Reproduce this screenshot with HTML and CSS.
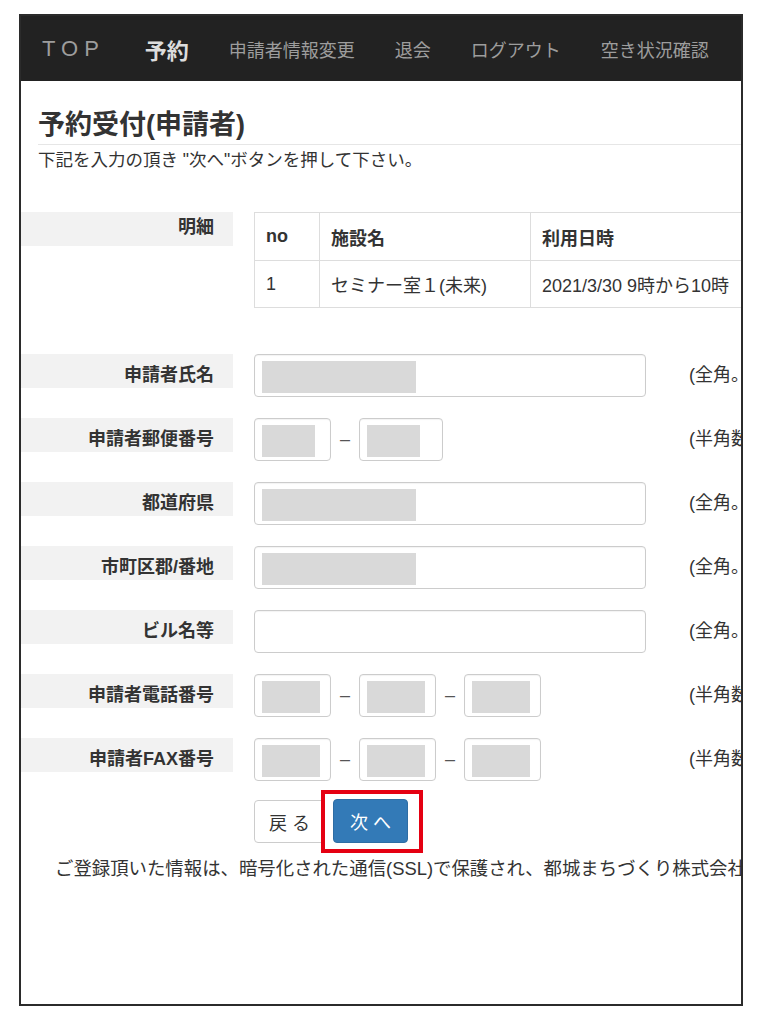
FILE: index.html
```html
<!DOCTYPE html>
<html lang="ja">
<head>
  <meta charset="utf-8">
  <title>予約受付(申請者)</title>
  <link rel="stylesheet" href="styles.css">
</head>
<body>

  <div class="frame">
    <div class="page">

      <nav class="navbar">
        <a class="brand" href="#">TOP</a>
        <ul class="nav-links">
          <li><a class="active" href="#">予約</a></li>
          <li><a href="#">申請者情報変更</a></li>
          <li><a href="#">退会</a></li>
          <li><a href="#">ログアウト</a></li>
          <li><a href="#">空き状況確認</a></li>
        </ul>
      </nav>

      <div class="page-header">
        <h1>予約受付(申請者)</h1>
        <p class="lead">下記を入力の頂き "次へ"ボタンを押して下さい。</p>
      </div>

      <form class="entry-form">
        <!-- 明細 -->
        <div class="row row-detail">
          <div class="label label-detail">明細</div>
          <table class="detail-table">
            <thead>
              <tr>
                <th class="col-no">no</th>
                <th class="col-name">施設名</th>
                <th class="col-date">利用日時</th>
              </tr>
            </thead>
            <tbody>
              <tr>
                <td>1</td>
                <td>セミナー室１(未来)</td>
                <td>2021/3/30 9時から10時</td>
              </tr>
            </tbody>
          </table>
        </div>

        <div class="row row-first">
          <div class="label">申請者氏名</div>
          <div class="field">
            <input class="input input-wide masked" type="text">
          </div>
          <div class="hint">(全角。50文字以内)</div>
        </div>

        <div class="row">
          <div class="label">申請者郵便番号</div>
          <div class="field field-group">
            <input class="input input-zip1 masked" type="text">
            <span class="dash">–</span>
            <input class="input input-zip2 masked" type="text">
          </div>
          <div class="hint">(半角数字)</div>
        </div>

        <div class="row">
          <div class="label">都道府県</div>
          <div class="field">
            <input class="input input-wide masked" type="text">
          </div>
          <div class="hint">(全角。10文字以内)</div>
        </div>

        <div class="row">
          <div class="label">市町区郡/番地</div>
          <div class="field">
            <input class="input input-wide masked" type="text">
          </div>
          <div class="hint">(全角。50文字以内)</div>
        </div>

        <div class="row">
          <div class="label">ビル名等</div>
          <div class="field">
            <input class="input input-wide" type="text">
          </div>
          <div class="hint">(全角。50文字以内)</div>
        </div>

        <div class="row">
          <div class="label">申請者電話番号</div>
          <div class="field field-group">
            <input class="input input-tel masked" type="text">
            <span class="dash">–</span>
            <input class="input input-tel masked" type="text">
            <span class="dash">–</span>
            <input class="input input-tel masked" type="text">
          </div>
          <div class="hint">(半角数字)</div>
        </div>

        <div class="row">
          <div class="label">申請者FAX番号</div>
          <div class="field field-group">
            <input class="input input-tel masked" type="text">
            <span class="dash">–</span>
            <input class="input input-tel masked" type="text">
            <span class="dash">–</span>
            <input class="input input-tel masked" type="text">
          </div>
          <div class="hint">(半角数字)</div>
        </div>

        <div class="buttons">
          <button class="btn btn-back" type="button">戻る</button>
          <span class="next-wrap">
            <button class="btn btn-next" type="submit">次へ</button>
          </span>
        </div>
      </form>

      <p class="notice">ご登録頂いた情報は、暗号化された通信(SSL)で保護され、都城まちづくり株式会社が責任をもって管理いたします。</p>

    </div>
  </div>

</body>
</html>
```

FILE: styles.css
```css
* {
  box-sizing: border-box;
}

body {
  margin: 0;
  background: #fff;
  color: #333;
  font-family: "Liberation Sans", "Noto Sans CJK JP", sans-serif;
  font-size: 18px;
}

/* screenshot frame */
.frame {
  width: 724px;
  height: 992px;
  margin: 14px 0 0 19px;
  border: 2px solid #2b2b2b;
  overflow: hidden;
}

.page {
  width: 1000px;
}

/* navbar */
.navbar {
  display: flex;
  align-items: center;
  height: 65px;
  padding-left: 21px;
  background: #222;
}

.brand {
  font-size: 22px;
  letter-spacing: 6px;
  color: #9d9d9d;
  text-decoration: none;
}

.nav-links {
  display: flex;
  align-items: center;
  gap: 40px;
  margin: 0 0 0 40px;
  padding: 0;
  list-style: none;
}

.nav-links a {
  color: #9d9d9d;
  font-size: 18px;
  text-decoration: none;
}

.nav-links a.active {
  color: #ddd;
  font-size: 22px;
  font-weight: bold;
}

/* header */
.page-header {
  padding: 0 0 0 17px;
}

.page-header h1 {
  margin: 28px 0 0;
  padding-bottom: 3px;
  font-size: 27px;
  line-height: 32px;
  border-bottom: 1px solid #e6e6e6;
}

.lead {
  margin: 3px 0 0;
  font-size: 17.5px;
  line-height: 24px;
}

/* form rows */
.row {
  display: flex;
  align-items: flex-start;
  margin-top: 21px;
}

.row-detail {
  margin-top: 40px;
}

.row-first {
  margin-top: 46px;
}

.label {
  flex: none;
  width: 212px;
  height: 34px;
  padding: 9px 19px 0 0;
  background: #f2f2f2;
  font-weight: bold;
  line-height: 24px;
  text-align: right;
}

.label-detail {
  padding-top: 3px;
}

.field {
  flex: none;
  width: 392px;
  margin-left: 21px;
}

.field-group {
  display: flex;
  align-items: center;
}

.dash {
  width: 28px;
  color: #555;
  text-align: center;
}

.hint {
  margin-left: 43px;
  line-height: 43px;
  white-space: nowrap;
}

.input {
  display: block;
  height: 43px;
  padding: 6px 12px;
  border: 1px solid #ccc;
  border-radius: 4px;
  background: #fff;
  font: inherit;
  color: #555;
  box-shadow: inset 0 1px 1px rgba(0,0,0,0.05);
}

.input-wide {
  width: 392px;
  --mask-w: 154px;
}

.input-zip1 {
  width: 77px;
  --mask-w: 53px;
}

.input-zip2 {
  width: 84px;
  --mask-w: 53px;
}

.input-tel {
  width: 77px;
  --mask-w: 58px;
}

.masked {
  background: linear-gradient(#d9d9d9, #d9d9d9) 7px 6px / var(--mask-w) 32px no-repeat, #fff;
}

/* detail table */
.detail-table {
  width: 520px;
  margin-left: 21px;
  border-collapse: collapse;
}

.detail-table th,
.detail-table td {
  padding: 0 11px;
  border: 1px solid #ddd;
  text-align: left;
  white-space: nowrap;
}

.detail-table th {
  height: 48px;
  font-weight: bold;
}

.detail-table td {
  height: 47px;
}

.col-no {
  width: 65px;
}

.col-name {
  width: 211px;
}

/* buttons */
.buttons {
  display: flex;
  align-items: center;
  margin-top: 9px;
  padding-left: 233px;
}

.btn {
  height: 44px;
  border-radius: 4px;
  font: inherit;
  letter-spacing: 5px;
  cursor: pointer;
}

.btn-back {
  width: 71px;
  height: 43px;
  padding: 0 0 0 5px;
  border: 1px solid #ccc;
  background: #fff;
  color: #333;
}

.next-wrap {
  display: block;
  margin-left: -4px;
  padding: 5px 11px 6px 8px;
  border: 4px solid #e50012;
  background: #fff;
}

.btn-next {
  display: block;
  width: 75px;
  padding: 0 0 0 5px;
  border: 1px solid #2e6da4;
  background: #337ab7;
  color: #fff;
}

.notice {
  margin: 4px 0 0;
  padding-left: 34px;
  font-size: 18.4px;
  line-height: 24px;
  white-space: nowrap;
}
```
